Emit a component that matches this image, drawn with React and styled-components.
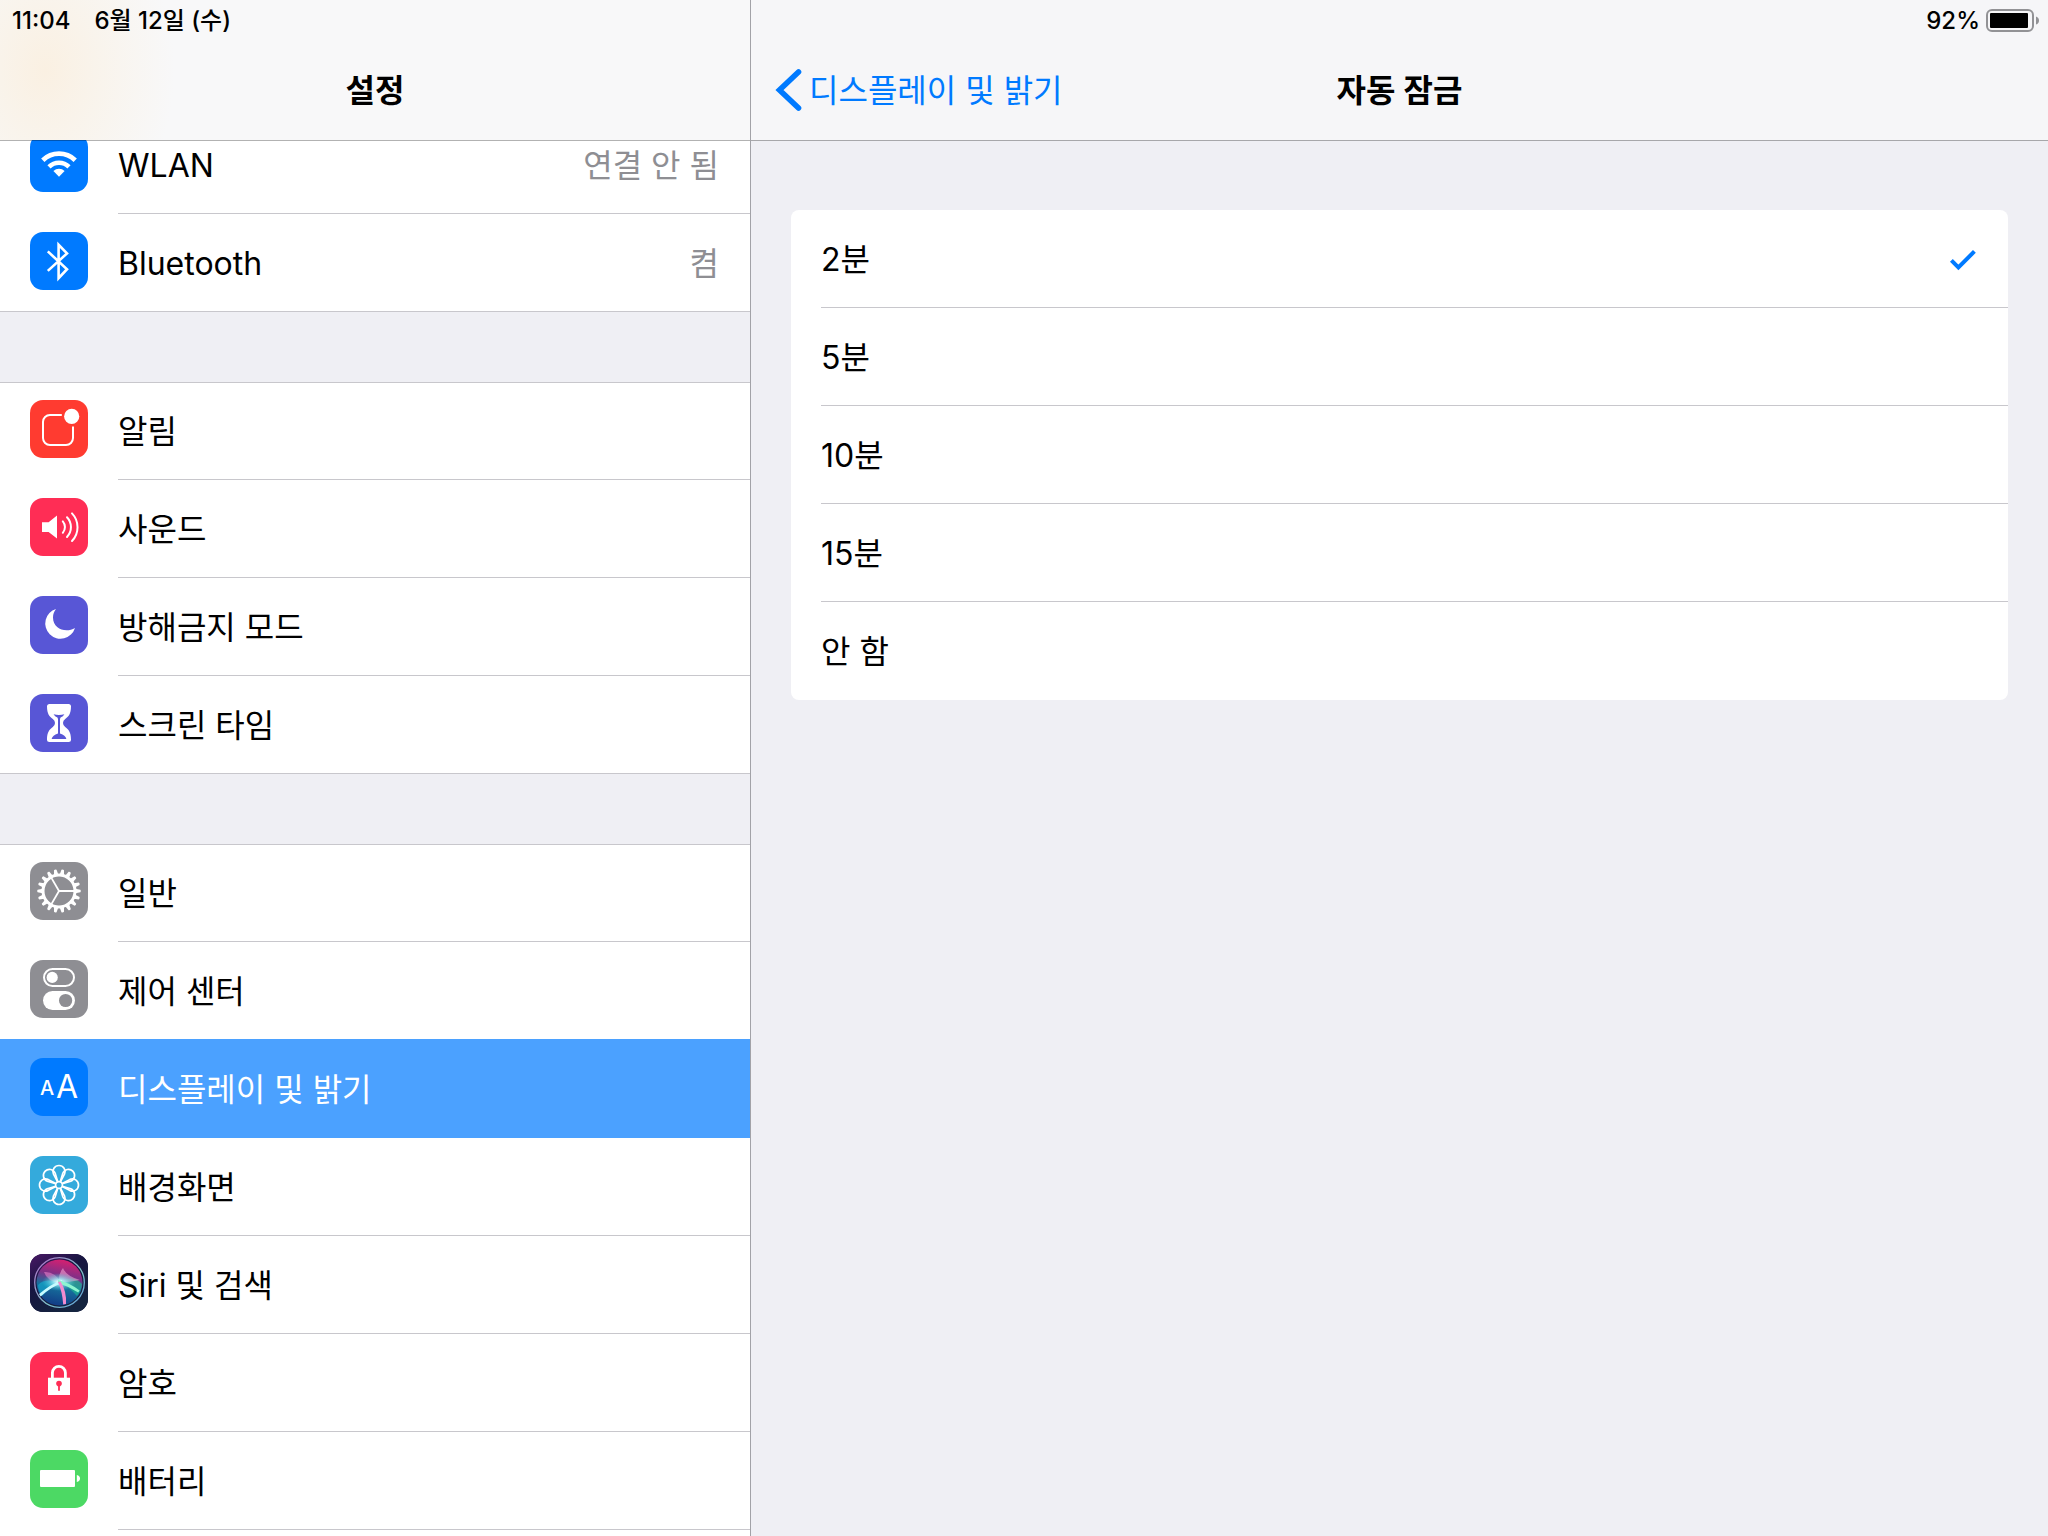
import { useState } from 'react';
import styled, { createGlobalStyle } from 'styled-components';

const GlobalStyle = createGlobalStyle`
    * {
        box-sizing: border-box;
    }
    body {
        margin: 0;
        font-family: Inter, "Noto Sans CJK KR", sans-serif;
        font-size: 32px;
        line-height: 40px;
        color: #000;
        background-color: #efeff4;
    }
`

const WlanIcon = () => <g fill="none" stroke="#fff">
    <path strokeWidth="4.8" d="M12.8 26.2 A23.4 23.4 0 0 1 45.2 26.2" />
    <path strokeWidth="4.6" d="M19 32.8 A14.4 14.4 0 0 1 39 32.8" />
    <path fill="#fff" stroke="none" d="M29 42.8 L23.4 37 A8.2 8.2 0 0 1 34.6 37 Z" />
</g>

const BluetoothIcon = () => <path fill="none" stroke="#fff" strokeWidth="2.6"
    d="M17.8 19.4 L37 37.2 L28.6 46.2 V12.8 L37 21.4 L17.8 38.9" />

const NotificationIcon = () => <g>
    <path fill="none" stroke="#fff" strokeWidth="2"
        d="M31.8 15 H20 A7 7 0 0 0 13 22 V38 A7 7 0 0 0 20 45 H36 A7 7 0 0 0 43 38 V26.6" />
    <circle cx="41.7" cy="16.4" r="7.6" fill="#fff" />
</g>

const SoundIcon = () => <g>
    <path fill="#fff" d="M12 24.3 H18.6 L27 17.6 V40.4 L18.6 34 H12 Z" />
    <g fill="none" stroke="#fff" strokeWidth="2" strokeLinecap="round">
        <path d="M32.8 23.4 A8.6 8.6 0 0 1 32.8 34.8" />
        <path d="M37 19.2 A14.4 14.4 0 0 1 37 39" />
        <path d="M42 15.4 A20 20 0 0 1 42 43" />
    </g>
</g>

const MoonIcon = () => <path fill="#fff"
    d="M26 13 A15.2 15.2 0 1 0 45 32 C36 37.5 23 33 23 21.5 C23 18 24 15.5 26 13 Z" />

const HourglassIcon = () => <g>
    <path fill="#fff" d="M19.5 10 H38.5 Q41 10 41 12.5 C41 20 38.5 22.5 35.2 25 Q33 26.5 33 29 Q33 31.5 35.2 33 C38.5 35.5 41 38 41 45.5 Q41 48 38.5 48 H19.5 Q17 48 17 45.5 C17 38 19.5 35.5 22.8 33 Q25 31.5 25 29 Q25 26.5 22.8 25 C19.5 22.5 17 20 17 12.5 Q17 10 19.5 10 Z" />
    <path fill="#5856d6" d="M23.6 20.2 Q29 21.6 34.4 20.2 Q33.2 22.4 30.6 23.6 L30 25 V39.6 Q35.5 41.4 36.4 45 H21.6 Q22.5 41.4 28 39.6 V25 L27.4 23.6 Q24.8 22.4 23.6 20.2 Z" />
</g>

const GearIcon = () => <g>
    {Array.from({ length: 18 }, (_, k) =>
        <path key={k} fill="#fff" transform={`rotate(${k * 20} 29 29)`} d="M44 26.6 L50.4 27.7 Q51.4 29 50.4 30.3 L44 31.4 Z" />
    )}
    <circle cx="29" cy="29" r="16" fill="none" stroke="#fff" strokeWidth="3" />
    {[0, 120, 240].map(a =>
        <path key={a} stroke="#fff" strokeWidth="1.8" transform={`rotate(${a} 29 29)`} d="M29 29 H44.5" />
    )}
</g>

const TogglesIcon = () => <g>
    <rect x="14" y="9" width="30" height="17" rx="8.5" fill="none" stroke="#fff" strokeWidth="2" />
    <circle cx="22.2" cy="17.4" r="5.6" fill="#fff" />
    <rect x="13" y="31" width="32" height="19" rx="9.5" fill="#fff" />
    <circle cx="35.6" cy="40.5" r="6.6" fill="#8e8e93" />
</g>

const TextSizeIcon = () => <g fill="#fff" fontFamily="Inter, sans-serif" textAnchor="middle">
    <text x="17" y="37" fontSize="20" fontWeight="500">A</text>
    <text x="37" y="40" fontSize="32">A</text>
</g>

const FlowerIcon = () => <g fill="none" stroke="#fff" strokeWidth="1.7">
    {Array.from({ length: 8 }, (_, k) =>
        <path key={k} transform={`rotate(${k * 45} 29 29)`} d="M27.6 25.8 L23.4 18 A6.1 6.1 0 1 1 34.6 18 L30.4 25.8" />
    )}
    <circle cx="29" cy="29" r="3.4" />
</g>

const SiriIcon = () => <g>
    <defs>
        <linearGradient id="siriSky" x1="0" y1="0" x2="0.6" y2="1">
            <stop offset="0" stopColor="#4a1766" />
            <stop offset="0.45" stopColor="#171540" />
            <stop offset="1" stopColor="#14243f" />
        </linearGradient>
        <linearGradient id="siriOrb" x1="0.6" y1="0" x2="0.4" y2="1">
            <stop offset="0" stopColor="#d81f70" />
            <stop offset="0.35" stopColor="#7c3088" />
            <stop offset="0.6" stopColor="#16709c" />
            <stop offset="1" stopColor="#123a86" />
        </linearGradient>
        <linearGradient id="siriRing" x1="0" y1="0" x2="1" y2="1">
            <stop offset="0" stopColor="#b06ac8" />
            <stop offset="0.6" stopColor="#7fc0c8" />
            <stop offset="1" stopColor="#5a9bd8" />
        </linearGradient>
        <radialGradient id="siriGlow">
            <stop offset="0" stopColor="#fff" />
            <stop offset="0.3" stopColor="#a8f4f8" stopOpacity="0.85" />
            <stop offset="1" stopColor="#39c5d8" stopOpacity="0" />
        </radialGradient>
    </defs>
    <rect width="58" height="58" fill="url(#siriSky)" />
    <circle cx="29.5" cy="28.5" r="23" fill="url(#siriOrb)" />
    <path fill="#1bb894" opacity="0.65" d="M30 28 Q44 20 52 30 Q51 37 47 42 Q40 34 30 28 Z" />
    <path fill="#12a9cc" opacity="0.65" d="M30 28 Q14 24 8 31 Q8 37 12 42 Q20 34 30 28 Z" />
    <path fill="#e880c8" opacity="0.6" d="M31 29 Q25 17 14 18 Q17 28 31 29 Z" />
    <path fill="#f0a0d0" opacity="0.6" d="M29 29 Q28 20 33 14 Q36 22 50 26 Q40 28 29 29 Z" />
    <ellipse cx="29" cy="28" rx="17" ry="9" fill="url(#siriGlow)" />
    <path fill="#c8fbff" d="M32 26 Q21 30 9 40 L10.6 42.4 Q21 33 32 29 Z" />
    <path fill="#8df5d0" d="M28 26 Q40 29 49.6 36.4 L48.2 38.6 Q38 32 28 29 Z" />
    <path fill="#f08cd0" d="M28 28 Q32.4 38 33.2 50.6 L36 50 Q37 38 30.6 27.4 Z" />
    <circle cx="29.5" cy="28.5" r="24.8" fill="none" stroke="url(#siriRing)" strokeWidth="1.3" />
</g>

const LockIcon = () => <g>
    <path fill="none" stroke="#fff" strokeWidth="2.8" d="M22.4 27 V20.8 A6.5 6.5 0 0 1 35.4 20.8 V27" />
    <rect x="18" y="25.7" width="22" height="17.3" fill="#fff" />
    <circle cx="29" cy="31.6" r="2.8" fill="#ff2d55" />
    <path stroke="#ff2d55" strokeWidth="1.8" d="M29 32 V38.8" />
</g>

const BatteryIcon = () => <g fill="#fff">
    <rect x="10" y="20" width="35" height="17" rx="1" />
    <path d="M46.8 25 Q50 25.6 50 28.5 Q50 31.4 46.8 32 Z" />
</g>

const sections = [
    [
        { label: "WLAN", value: "연결 안 됨", color: "#007aff", Icon: WlanIcon },
        { label: "Bluetooth", value: "켬", color: "#007aff", Icon: BluetoothIcon },
    ],
    [
        { label: "알림", color: "#ff3b30", Icon: NotificationIcon },
        { label: "사운드", color: "#ff2d55", Icon: SoundIcon },
        { label: "방해금지 모드", color: "#5856d6", Icon: MoonIcon },
        { label: "스크린 타임", color: "#5856d6", Icon: HourglassIcon },
    ],
    [
        { label: "일반", color: "#8e8e93", Icon: GearIcon },
        { label: "제어 센터", color: "#8e8e93", Icon: TogglesIcon },
        { label: "디스플레이 및 밝기", color: "#007aff", Icon: TextSizeIcon },
        { label: "배경화면", color: "#34aadc", Icon: FlowerIcon },
        { label: "Siri 및 검색", color: "#171540", Icon: SiriIcon },
        { label: "암호", color: "#ff2d55", Icon: LockIcon },
        { label: "배터리", color: "#4cd964", Icon: BatteryIcon },
    ],
]

const lockTimes = ["2분", "5분", "10분", "15분", "안 함"]

export default function App() {
    const [page, setPage] = useState("디스플레이 및 밝기")
    const [lockTime, setLockTime] = useState("2분")

    function open(e, label) {
        e.preventDefault()
        setPage(label)
    }

    return <Frame>
        <GlobalStyle />
        <Sidebar>
            <SidebarHeader>
                <StatusBar>
                    <span>11:04</span>
                    <span>6월 12일 (수)</span>
                </StatusBar>
                <NavBar>
                    <Title>설정</Title>
                </NavBar>
            </SidebarHeader>
            <Menu>
                {sections.map((items, k) =>
                    <Section key={k}>
                        {items.map(({ label, value, color, Icon }) =>
                            <MenuRow key={label} href="#" $selected={label === page} onClick={(e) => open(e, label)}>
                                <Tile viewBox="0 0 58 58" $color={color} aria-hidden="true"><Icon /></Tile>
                                <RowLabel>
                                    <span>{label}</span>
                                    {value && <Value>{value}</Value>}
                                </RowLabel>
                            </MenuRow>
                        )}
                    </Section>
                )}
            </Menu>
        </Sidebar>
        <Detail>
            <Header>
                <StatusBar $end>
                    <span>92%</span>
                    <BatteryLevel viewBox="0 0 54 24" aria-hidden="true">
                        <rect x="1" y="1" width="46" height="21" rx="5" fill="none" stroke="#929295" strokeWidth="2" />
                        <rect x="4" y="4" width="38" height="15" rx="1" />
                        <path fill="#929295" d="M50 7.5 Q53 8.5 53 11.5 Q53 14.5 50 15.5 Z" />
                    </BatteryLevel>
                </StatusBar>
                <NavBar>
                    <Back href="#">
                        <svg width="28" height="44" viewBox="0 0 28 44" aria-hidden="true">
                            <path d="M23.5 3 L4.5 21 L23.5 39" fill="none" stroke="#007aff" strokeWidth="5.6" strokeLinecap="round" />
                        </svg>
                        디스플레이 및 밝기
                    </Back>
                    <Title>자동 잠금</Title>
                </NavBar>
            </Header>
            <Card>
                {lockTimes.map(time =>
                    <Option key={time}>
                        <Radio name="lock" checked={time === lockTime} onChange={() => setLockTime(time)} />
                        <RowLabel>
                            {time}
                            {time === lockTime && <svg width="28" height="24" viewBox="0 0 28 24" aria-hidden="true">
                                <path d="M2.4 12.4 L9.4 19.4 L25.4 3.4" fill="none" stroke="#007aff" strokeWidth="4" />
                            </svg>}
                        </RowLabel>
                    </Option>
                )}
            </Card>
        </Detail>
    </Frame>;
}

const Frame = styled.div`
    display: flex;
    height: 100vh;
    overflow: hidden;
`

const Sidebar = styled.aside`
    flex: 0 0 751px;
    display: flex;
    flex-direction: column;
    border-right: 1px solid #a2a2a7;
    overflow: hidden;
`

const Header = styled.header`
    position: relative;
    z-index: 2;
    flex: none;
    background-color: #f6f6f8;
    background-clip: padding-box;
    border-bottom: 1px solid rgba(0, 0, 0, 0.3);
`

const SidebarHeader = styled(Header)`
    background-color: #f8f8f9;
    background-image: radial-gradient(130px 170px at 45px 70px, #faf0e2, rgba(249, 243, 233, 0.7) 50%, rgba(248, 248, 249, 0));
`

const StatusBar = styled.div`
    display: flex;
    align-items: center;
    justify-content: ${p => p.$end ? "flex-end" : "flex-start"};
    gap: ${p => p.$end ? 6 : 24}px;
    height: 42px;
    padding: 0 ${p => p.$end ? 8 : 12}px;
    font-size: 24px;
    font-weight: 500;
`

const BatteryLevel = styled.svg`
    width: 54px;
    height: 24px;
`

const NavBar = styled.nav`
    display: grid;
    grid-template-columns: 1fr auto 1fr;
    align-items: center;
    height: 98px;
    padding: 0 24px;
`

const Title = styled.h1`
    grid-column: 2;
    margin: 0;
    font-size: 32px;
    font-weight: 600;
`

const Back = styled.a`
    grid-column: 1;
    display: flex;
    align-items: center;
    gap: 6px;
    color: #007aff;
    text-decoration: none;
    white-space: nowrap;
`

const Menu = styled.div`
    flex: 1;
    display: flex;
    flex-direction: column;
    gap: 70px;
    margin-top: -25px;
`

const Section = styled.section`
    background-color: #fff;
    box-shadow: inset 0 1px #c8c7cc, inset 0 -1px #c8c7cc;

    &:last-child {
        flex: 1;
        box-shadow: inset 0 1px #c8c7cc;
    }
`

const RowLabel = styled.span`
    flex: 1;
    display: flex;
    align-items: center;
    justify-content: space-between;
    padding: 2px 31px 0 0;
    border-bottom: 1px solid #c8c7cc;
`

const Value = styled.span`
    color: #8e8e93;
`

const MenuRow = styled.a`
    position: relative;
    z-index: ${p => p.$selected ? 1 : 0};
    display: flex;
    gap: 30px;
    height: 98px;
    padding-left: 30px;
    color: ${p => p.$selected ? "#fff" : "#000"};
    background-color: ${p => p.$selected ? "#4ba1ff" : "transparent"};
    box-shadow: ${p => p.$selected ? "0 -1px #4ba1ff" : "none"};
    text-decoration: none;

    ${RowLabel} {
        ${p => p.$selected && "border-color: transparent;"}
    }
`

const Tile = styled.svg`
    flex: none;
    width: 58px;
    height: 58px;
    margin-top: 18px;
    border-radius: 13px;
    background-color: ${p => p.$color};
`

const Detail = styled.main`
    flex: 1;
    min-width: 0;
`

const Card = styled.div`
    margin: 69px 40px;
    border-radius: 8px;
    background-color: #fff;
`

const Option = styled.label`
    position: relative;
    display: flex;
    height: 98px;
    padding-left: 30px;

    &:last-child ${RowLabel} {
        border-color: transparent;
    }
`

const Radio = styled.input.attrs({ type: "radio" })`
    position: absolute;
    inset: 0;
    width: 100%;
    height: 100%;
    margin: 0;
    opacity: 0;
`
